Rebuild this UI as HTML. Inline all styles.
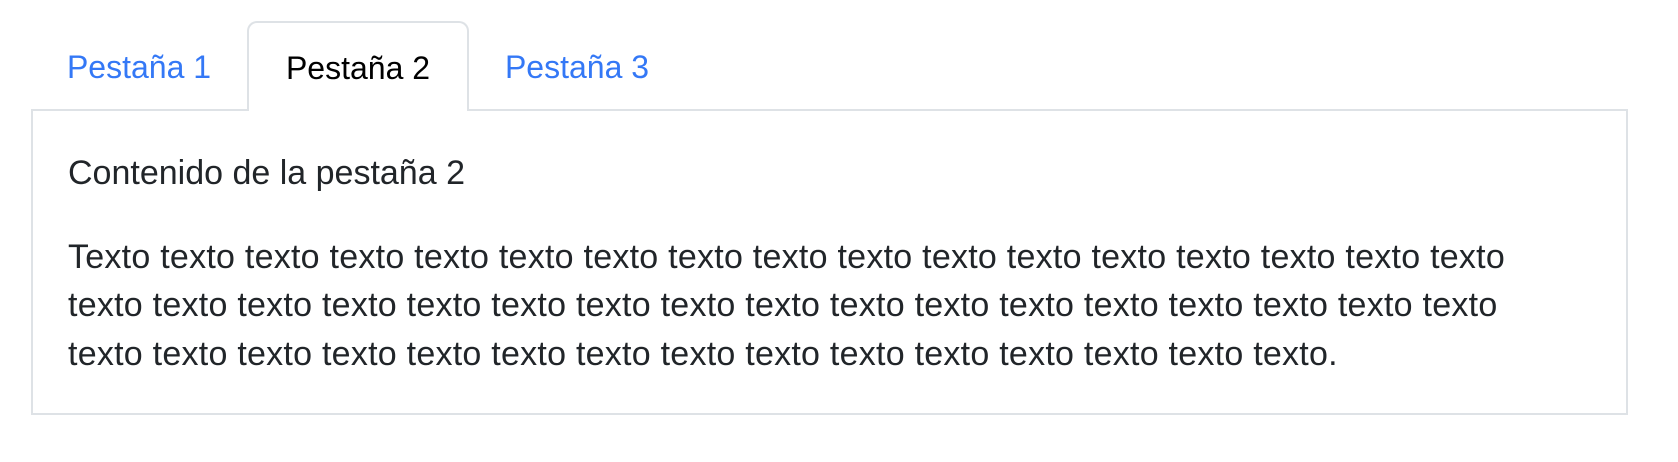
<!DOCTYPE html>
<html><head><meta charset="utf-8"><style>
html,body{margin:0;padding:0;background:#fff;width:1678px;height:462px;overflow:hidden;font-family:"Liberation Sans",Helvetica,Arial,sans-serif;color:#212529}
.nav{position:absolute;left:31px;top:23px;width:1597px;height:86px;border-bottom:2px solid #dee2e6;box-sizing:content-box}
.tab{position:absolute;top:0;height:86px;line-height:88px;font-size:32px;color:#3478f6;text-align:center}
.t1{left:0;width:216px}
.t2{left:216px;top:-2px;height:90px;line-height:90px;border:2px solid #dee2e6;border-bottom:none;border-radius:10px 10px 0 0;background:#fff;color:#000;box-sizing:border-box;width:222px}
.t3{left:437px;width:218px}
.panel{position:absolute;left:31px;top:109px;width:1597px;height:306px;border:2px solid #dee2e6;border-top:none;box-sizing:border-box;padding:40px 35px 0 35px;font-size:34px;line-height:48.6px}
p{margin:0}
.h{margin-bottom:35px}
.b{letter-spacing:0.25px;width:1500px}
</style></head><body>
<div class="nav">
<div class="tab t1">Pestaña 1</div>
<div class="tab t2">Pestaña 2</div>
<div class="tab t3">Pestaña 3</div>
</div>
<div class="panel">
<p class="h">Contenido de la pestaña 2</p>
<p class="b">Texto texto texto texto texto texto texto texto texto texto texto texto texto texto texto texto texto<br>texto texto texto texto texto texto texto texto texto texto texto texto texto texto texto texto texto<br>texto texto texto texto texto texto texto texto texto texto texto texto texto texto texto.</p>
</div>
</body></html>
